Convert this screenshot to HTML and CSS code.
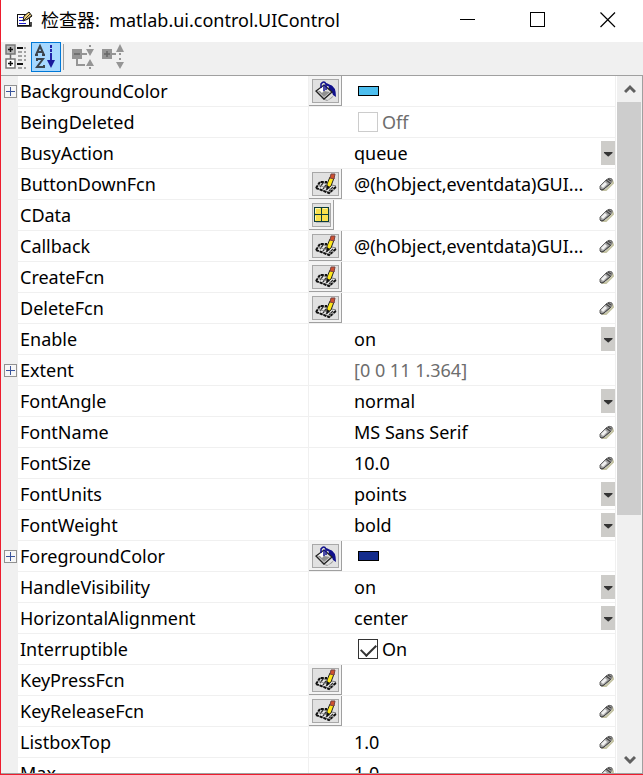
FILE: index.html
```html
<!DOCTYPE html>
<html lang="zh-CN">
<head>
    <meta charset="UTF-8">
    <meta name="viewport" content="width=device-width, initial-scale=1.0">
    <title>检查器: matlab.ui.control.UIControl</title>
    <link rel="stylesheet" href="styles.css">
</head>
<body>
    <!-- shared icons -->
    <svg class="defs" aria-hidden="true">
        <symbol id="i-bucket" viewBox="0 0 22 20">
            <path d="M15 4 Q21 5 21 16 L18 14 Q17 10 13 8 Z" fill="#10108c"/>
            <path d="M5 17 L13 19 L19 14 L17 17 L12 20 Z" fill="#999"/>
            <path d="M9 4 L17 11 L9 18 L1 10 Z" fill="#ddd" stroke="#222" stroke-width="1.3"/>
            <path d="M3 10 L9 16 L15 11 L9 10 Z" fill="#909090"/>
            <path d="M4 9 L9 5 L11 7 L7 12 Z" fill="#fff"/>
            <path d="M6 7 V3 Q9 -1 11 3 V9 M9 4 V10" fill="none" stroke="#10108c" stroke-width="1.5"/>
            <path d="M11 3 L17 6" stroke="#10108c" stroke-width="2"/>
        </symbol>
        <symbol id="i-edit" viewBox="0 0 22 22">
            <path d="M1 15 L5 9 L21 13 L15 20 Z" fill="#e8e8e8" stroke="#777"/>
            <path d="M1 15 L5 9 L12 9 M1 15 L14 20 L21 14" fill="none" stroke="#111" stroke-width="2" stroke-dasharray="3 1"/>
            <path d="M5 14 L8 10 M8 16 L11 12 M11 17 L13 15 M14 18 L18 14" stroke="#333" stroke-width="1.3"/>
            <path d="M3 12 L18 17" stroke="#999"/>
            <path d="M12 16 L12 11 L15 4 L19 5 L16 13 Z" fill="#ffe81a" stroke="#222"/>
            <path d="M15 5 L16 1 L20 1 L19 6 Z" fill="#d0502f" stroke="#744"/>
            <path d="M12 17 L11.500 12 L15 14 Z" fill="#111"/>
        </symbol>
        <symbol id="i-grid" viewBox="0 0 16 16">
            <path d="M2 16 H16 V2" fill="none" stroke="#999"/>
            <rect x="0.500" y="0.500" width="14" height="14" fill="#f8e04c" stroke="#0d3c3c"/>
            <path d="M7.500 0 V15 M0 7.500 H15" stroke="#0d3c3c"/>
            <path d="M1.500 6 V1.500 H6 M9 1.500 H13 M1.500 13 V9" stroke="#fff8b0" fill="none"/>
        </symbol>
        <symbol id="i-pen" viewBox="0 0 16 16">
            <path d="M4 14 L8 14 L15 7 L14 4" fill="none" stroke="#c4c3a4" stroke-width="2"/>
            <path d="M2 10 L8 4 Q11 1 14 3 Q15 5 12 8 L6 13 Q3 15 2 13 Z" fill="#a2a2a2" stroke="#666"/>
            <path d="M4 11 L8 7" stroke="#f0f0f0" stroke-width="3"/>
            <path d="M2 13 Q4 15 6 13 L13 7" fill="none" stroke="#444"/>
            <path d="M8 4 L12 7 M10 3 L13 5" stroke="#444" stroke-width="1.2"/>
        </symbol>
        <symbol id="i-arrow" viewBox="0 0 14 24">
            <path d="M3 11 H11.500 V12 L7.500 15.500 H7 L3 12 Z" fill="#333"/>
        </symbol>
        <symbol id="i-plus" viewBox="0 0 13 13">
            <path d="M2 6.500 H11 M6.500 2 V11" stroke="#39549c"/>
        </symbol>
    </svg>

    <div class="window">
        <header class="titlebar">
            <svg class="app-icon" width="17" height="17" viewBox="0 0 17 17">
                <path d="M1 3.500 H13.500 V14.500 H1.500 V3" fill="#fff" stroke="#111"/>
                <path d="M1 15 H15 V11" fill="none" stroke="#111" stroke-width="1.500"/>
                <path d="M3 6.500 H7 M3 9.500 H7 M3 12.500 H10" stroke="#1c1cd0"/>
                <path d="M7 10 L8 5 L13 1 L16 5 L12 8 Z" fill="#f4d27a" stroke="#111"/>
                <path d="M8 9 L14 3 M10 9 L15 5" stroke="#333"/>
            </svg>
            <h1>检查器:&nbsp; matlab.ui.control.UIControl</h1>
            <div class="caption-buttons">
                <button aria-label="Minimize"><svg width="16" height="16"><path d="M0 7.500 H15" stroke="#000"/></svg></button>
                <button aria-label="Maximize"><svg width="16" height="16"><rect x="0.500" y="0.500" width="14" height="14" fill="none" stroke="#000"/></svg></button>
                <button aria-label="Close"><svg width="16" height="16"><path d="M0.500 0.500 L15 15 M15 0.500 L0.500 15" stroke="#000" stroke-width="1.200"/></svg></button>
            </div>
        </header>

        <div class="toolbar">
            <button aria-label="Group by category">
                <svg width="22" height="26" viewBox="0 0 22 26">
                    <path d="M5.500 9 V17" stroke="#666" stroke-width="1.500"/>
                    <rect x="1" y="1" width="9" height="9" fill="#b8b8b8" stroke="#777" stroke-width="1.500"/>
                    <rect x="1" y="15" width="9" height="9" fill="#fff" stroke="#777" stroke-width="1.500"/>
                    <path d="M3 5.500 H8 M5.500 3 V8 M3 19.500 H8 M5.500 17 V22" stroke="#111" stroke-width="1.500"/>
                    <path d="M12 4 H18 M12 20 H18" stroke="#111" stroke-width="2"/>
                    <path d="M13 8 H17 M19 8 H21 M13 12 H17 M19 12 H21 M13 16 H17 M19 16 H21 M13 24 H17 M19 24 H21 M19 4 H21" stroke="#888" stroke-width="1.500"/>
                </svg>
            </button>
            <button class="selected" aria-label="Sort alphabetically">
                <svg width="22" height="26" viewBox="0 0 22 26">
                    <path d="M1 11 L5 2 L9 11 M3 8 H8 M0 11 H3 M7 11 H10" fill="none" stroke="#3c444c" stroke-width="2"/>
                    <path d="M2 17 V15 H8 L2 23 H9 V21" fill="none" stroke="#3c444c" stroke-width="2"/>
                    <path d="M16 1 V4 M16 5 V8 M16 9 V18" stroke="#2222a8" stroke-width="2"/>
                    <path d="M12 16 H20 L16 24 Z" fill="#1a1a9c"/>
                </svg>
            </button>
            <span class="separator"></span>
            <button disabled aria-label="Collapse all">
                <svg width="24" height="26" viewBox="0 0 24 26">
                    <rect x="1" y="5" width="10" height="10" fill="#959595"/>
                    <path d="M3 10 H9" stroke="#666" stroke-width="1.500"/>
                    <path d="M11 10 H16 M6 15 V21 H14" fill="none" stroke="#959595" stroke-width="2"/>
                    <path d="M15 5 H23 L19 12 Z M15 22 H23 L19 15 Z" fill="#959595"/>
                    <path d="M19 1 V3 M19 23 V25" stroke="#959595" stroke-width="2"/>
                </svg>
            </button>
            <button disabled aria-label="Expand all">
                <svg width="24" height="26" viewBox="0 0 24 26">
                    <rect x="1" y="5" width="10" height="10" fill="#959595"/>
                    <path d="M3 10 H9 M6 7 V13" stroke="#666" stroke-width="1.500"/>
                    <path d="M11 10 H15" stroke="#959595" stroke-width="2"/>
                    <path d="M15 8 H23 L19 0 Z M15 18 H23 L19 25 Z" fill="#959595"/>
                    <path d="M19 9 V11 M19 14 V16" stroke="#959595" stroke-width="2"/>
                </svg>
            </button>
        </div>

        <main class="inspector">
            <div class="sheet">
                <table>
                    <colgroup><col class="col-gutter"><col class="col-name"><col class="col-tool"><col></colgroup>
                    <tbody>
                        <tr>
                            <td><button class="expand" aria-label="Expand BackgroundColor"><svg width="13" height="13"><use href="#i-plus"/></svg></button></td>
                            <th scope="row">BackgroundColor</th>
                            <td><button class="tool" aria-label="Pick color"><span><svg width="22" height="20"><use href="#i-bucket"/></svg></span></button></td>
                            <td><div class="field"><span class="swatch sky"></span></div></td>
                        </tr>
                        <tr>
                            <td></td><th scope="row">BeingDeleted</th><td></td>
                            <td><div class="field"><label class="check off"><input type="checkbox" disabled>Off</label></div></td>
                        </tr>
                        <tr>
                            <td></td><th scope="row"><label for="busy">BusyAction</label></th><td></td>
                            <td><div class="field"><select id="busy"><option>queue</option><option>cancel</option></select><svg class="arrow"><use href="#i-arrow"/></svg></div></td>
                        </tr>
                        <tr>
                            <td></td><th scope="row"><label for="down">ButtonDownFcn</label></th>
                            <td><button class="tool" aria-label="Edit ButtonDownFcn"><span><svg width="22" height="22"><use href="#i-edit"/></svg></span></button></td>
                            <td><div class="field"><input type="text" id="down" value="@(hObject,eventdata)GUI..."><svg class="pen"><use href="#i-pen"/></svg></div></td>
                        </tr>
                        <tr>
                            <td></td><th scope="row"><label for="cdata">CData</label></th>
                            <td><button class="tool small" aria-label="Edit CData"><span><svg width="16" height="16"><use href="#i-grid"/></svg></span></button></td>
                            <td><div class="field"><input type="text" id="cdata"><svg class="pen"><use href="#i-pen"/></svg></div></td>
                        </tr>
                        <tr>
                            <td></td><th scope="row"><label for="callback">Callback</label></th>
                            <td><button class="tool" aria-label="Edit Callback"><span><svg width="22" height="22"><use href="#i-edit"/></svg></span></button></td>
                            <td><div class="field"><input type="text" id="callback" value="@(hObject,eventdata)GUI..."><svg class="pen"><use href="#i-pen"/></svg></div></td>
                        </tr>
                        <tr>
                            <td></td><th scope="row"><label for="create">CreateFcn</label></th>
                            <td><button class="tool" aria-label="Edit CreateFcn"><span><svg width="22" height="22"><use href="#i-edit"/></svg></span></button></td>
                            <td><div class="field"><input type="text" id="create"><svg class="pen"><use href="#i-pen"/></svg></div></td>
                        </tr>
                        <tr>
                            <td></td><th scope="row"><label for="delete">DeleteFcn</label></th>
                            <td><button class="tool" aria-label="Edit DeleteFcn"><span><svg width="22" height="22"><use href="#i-edit"/></svg></span></button></td>
                            <td><div class="field"><input type="text" id="delete"><svg class="pen"><use href="#i-pen"/></svg></div></td>
                        </tr>
                        <tr>
                            <td></td><th scope="row"><label for="enable">Enable</label></th><td></td>
                            <td><div class="field"><select id="enable"><option>on</option><option>off</option></select><svg class="arrow"><use href="#i-arrow"/></svg></div></td>
                        </tr>
                        <tr>
                            <td><button class="expand" aria-label="Expand Extent"><svg width="13" height="13"><use href="#i-plus"/></svg></button></td>
                            <th scope="row">Extent</th><td></td>
                            <td><div class="field"><span class="readonly">[0 0 11 1.364]</span></div></td>
                        </tr>
                        <tr>
                            <td></td><th scope="row"><label for="angle">FontAngle</label></th><td></td>
                            <td><div class="field"><select id="angle"><option>normal</option><option>italic</option></select><svg class="arrow"><use href="#i-arrow"/></svg></div></td>
                        </tr>
                        <tr>
                            <td></td><th scope="row"><label for="fname">FontName</label></th><td></td>
                            <td><div class="field"><input type="text" id="fname" value="MS Sans Serif"><svg class="pen"><use href="#i-pen"/></svg></div></td>
                        </tr>
                        <tr>
                            <td></td><th scope="row"><label for="fsize">FontSize</label></th><td></td>
                            <td><div class="field"><input type="text" id="fsize" value="10.0"><svg class="pen"><use href="#i-pen"/></svg></div></td>
                        </tr>
                        <tr>
                            <td></td><th scope="row"><label for="units">FontUnits</label></th><td></td>
                            <td><div class="field"><select id="units"><option>points</option><option>pixels</option></select><svg class="arrow"><use href="#i-arrow"/></svg></div></td>
                        </tr>
                        <tr>
                            <td></td><th scope="row"><label for="weight">FontWeight</label></th><td></td>
                            <td><div class="field"><select id="weight"><option>bold</option><option>normal</option></select><svg class="arrow"><use href="#i-arrow"/></svg></div></td>
                        </tr>
                        <tr>
                            <td><button class="expand" aria-label="Expand ForegroundColor"><svg width="13" height="13"><use href="#i-plus"/></svg></button></td>
                            <th scope="row">ForegroundColor</th>
                            <td><button class="tool" aria-label="Pick color"><span><svg width="22" height="20"><use href="#i-bucket"/></svg></span></button></td>
                            <td><div class="field"><span class="swatch navy"></span></div></td>
                        </tr>
                        <tr>
                            <td></td><th scope="row"><label for="visible">HandleVisibility</label></th><td></td>
                            <td><div class="field"><select id="visible"><option>on</option><option>off</option></select><svg class="arrow"><use href="#i-arrow"/></svg></div></td>
                        </tr>
                        <tr>
                            <td></td><th scope="row"><label for="align">HorizontalAlignment</label></th><td></td>
                            <td><div class="field"><select id="align"><option>center</option><option>left</option><option>right</option></select><svg class="arrow"><use href="#i-arrow"/></svg></div></td>
                        </tr>
                        <tr>
                            <td></td><th scope="row">Interruptible</th><td></td>
                            <td><div class="field"><label class="check"><input type="checkbox" checked>On</label></div></td>
                        </tr>
                        <tr>
                            <td></td><th scope="row"><label for="keypress">KeyPressFcn</label></th>
                            <td><button class="tool" aria-label="Edit KeyPressFcn"><span><svg width="22" height="22"><use href="#i-edit"/></svg></span></button></td>
                            <td><div class="field"><input type="text" id="keypress"><svg class="pen"><use href="#i-pen"/></svg></div></td>
                        </tr>
                        <tr>
                            <td></td><th scope="row"><label for="keyrelease">KeyReleaseFcn</label></th>
                            <td><button class="tool" aria-label="Edit KeyReleaseFcn"><span><svg width="22" height="22"><use href="#i-edit"/></svg></span></button></td>
                            <td><div class="field"><input type="text" id="keyrelease"><svg class="pen"><use href="#i-pen"/></svg></div></td>
                        </tr>
                        <tr>
                            <td></td><th scope="row"><label for="listbox">ListboxTop</label></th><td></td>
                            <td><div class="field"><input type="text" id="listbox" value="1.0"><svg class="pen"><use href="#i-pen"/></svg></div></td>
                        </tr>
                        <tr>
                            <td></td><th scope="row"><label for="max">Max</label></th><td></td>
                            <td><div class="field"><input type="text" id="max" value="1.0"><svg class="pen"><use href="#i-pen"/></svg></div></td>
                        </tr>
                    </tbody>
                </table>
            </div>
            <div class="scrollbar">
                <button aria-label="Scroll up"><svg width="12" height="10"><path d="M1 8 L6 3 L11 8" fill="none" stroke="#606060" stroke-width="3"/></svg></button>
                <div class="track"><div class="thumb"></div></div>
                <button aria-label="Scroll down"><svg width="12" height="10"><path d="M1 2 L6 7 L11 2" fill="none" stroke="#606060" stroke-width="3"/></svg></button>
            </div>
        </main>
    </div>
</body>
</html>
```
FILE: styles.css
```css
* {
    box-sizing: border-box;
}
body {
    margin: 0;
    font-family: "Noto Sans", "Noto Sans CJK SC", sans-serif;
    font-size: 18px;
    line-height: 24px;
    color: #000;
    background-color: #fff;
}
button, input, select {
    font: inherit;
    color: inherit;
    margin: 0;
    padding: 0;
    border: none;
    background: none;
}
svg {
    display: block;
    flex: none;
}
.defs {
    display: none;
}
.window {
    display: flex;
    flex-direction: column;
    height: 100vh;
    border-left: 1px solid #ed1c2e;
    border-bottom: 1px solid #ed1c2e;
}

/* title bar */
.titlebar {
    display: flex;
    align-items: center;
    height: 42px;
    padding: 0 0 3px 15px;
}
.titlebar h1 {
    flex: 1;
    margin: 0 0 0 8px;
    font-size: 18px;
    font-weight: normal;
    white-space: nowrap;
}
.caption-buttons {
    display: flex;
}
.caption-buttons button {
    display: flex;
    align-items: center;
    justify-content: center;
    width: 70px;
    height: 39px;
}

/* toolbar */
.toolbar {
    display: flex;
    height: 33px;
    background-color: #f0f0f0;
}
.toolbar button {
    display: flex;
    align-items: center;
    justify-content: center;
    width: 30px;
    height: 30px;
}
.toolbar .selected {
    border: 1px solid #0078d7;
    background-color: #a6d8ff;
}
.separator {
    width: 1px;
    height: 26px;
    margin: 2px 4px 0 2px;
    background-color: #a0a0a0;
}

/* property sheet */
.inspector {
    display: flex;
    flex: 1;
    min-height: 0;
    border: 1px solid #a0a0a0;
    border-left: none;
}
.sheet {
    flex: 1;
    overflow: hidden;
    border-right: 1px solid #f0f0f0;
    margin-right: 1px;
}
table {
    width: 100%;
    table-layout: fixed;
    border-collapse: separate;
    border-spacing: 0;
}
.col-gutter {
    width: 17px;
}
.col-name {
    width: 291px;
}
.col-tool {
    width: 36px;
}
th, td {
    height: 31px;
    padding: 0;
    border-bottom: 1px solid #f0f0f0;
    vertical-align: middle;
}
td:first-child {
    background-color: #f0f0f0;
}
th {
    padding-left: 2px;
    border-right: 1px solid #f0f0f0;
    font-weight: normal;
    text-align: left;
}
.expand {
    display: block;
    width: 13px;
    height: 13px;
    margin-left: 3px;
    background-color: #f6f6f6;
    box-shadow: inset 0 0 0 1px #919191;
}
.tool {
    display: block;
    width: 33px;
    height: 30px;
    padding: 3px 2px 2px 3px;
    background-color: #f4f4f4;
    border-right: 1px solid #a0a0a0;
    border-bottom: 1px solid #a0a0a0;
}
.tool.small {
    width: 25px;
}
.tool span {
    display: flex;
    align-items: center;
    justify-content: center;
    height: 24px;
    border: 1px solid #a8a8a8;
    background-color: #e1e1e1;
}
.field {
    display: flex;
    align-items: center;
    height: 30px;
    padding-left: 9px;
}
.field input[type="text"], .field select {
    flex: 1;
    min-width: 0;
    height: 30px;
    appearance: none;
    outline: none;
}
.readonly {
    color: #6d6d6d;
}
.pen {
    width: 16px;
    height: 16px;
    margin-right: 1px;
}
.arrow {
    width: 14px;
    height: 24px;
    background-color: #cdccc9;
}
.swatch {
    width: 21px;
    height: 10px;
    margin-left: 4px;
    border: 1px solid #000;
}
.sky {
    background-color: #4dbeee;
}
.navy {
    background-color: #142c8c;
}
.check {
    display: flex;
    align-items: center;
    gap: 4px;
    margin-left: 4px;
}
.check input {
    display: grid;
    width: 20px;
    height: 20px;
    appearance: none;
    border: 1px solid #333;
    background-color: #fff;
}
.check input:checked::before {
    content: "";
    width: 13px;
    height: 7px;
    margin: 4px 0 0 2px;
    border-left: 2px solid #333;
    border-bottom: 2px solid #333;
    transform: rotate(-45deg);
}
.off {
    color: #6d6d6d;
}
.off input {
    border-color: #ccc;
}

/* scroll bar */
.scrollbar {
    display: flex;
    flex-direction: column;
    width: 25px;
    background-color: #f0f0f0;
}
.scrollbar button {
    display: flex;
    align-items: center;
    justify-content: center;
    height: 26px;
}
.track {
    flex: 1;
}
.thumb {
    width: 24px;
    height: 64%;
    background-color: #cdcdcd;
}
```
